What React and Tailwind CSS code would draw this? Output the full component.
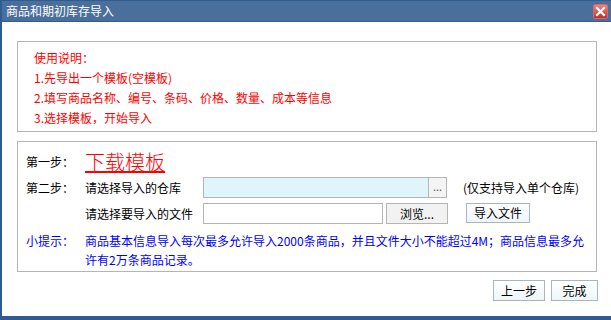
import React from 'react';

const font = { fontFamily: '"Noto Sans CJK SC", "Liberation Sans", sans-serif' };

const Btn = ({ children, className = '' }) => (
  <button
    className={`flex items-center justify-center border border-[#a9b6c0] bg-gradient-to-b from-white to-[#eef6fa] text-[12px] text-black leading-none ${className}`}
  >
    {children}
  </button>
);

export default function App() {
  return (
    <div className="w-[611px] h-[320px] overflow-hidden bg-white flex flex-col border-l-2 border-b-4 border-[#2d5d90]" style={font}>
      {/* Title bar */}
      <div className="h-[22px] shrink-0 flex items-center justify-between bg-[#4a6f9b] border-t border-b border-[#2f5d8f] pl-1 pr-[3px]">
        <span className="text-[12px] text-white leading-none">商品和期初库存导入</span>
        <div className="w-[15px] h-[15px] rounded-[2px] bg-gradient-to-b from-[#f08080] to-[#c42a2a] border border-[#d66] flex items-center justify-center">
          <svg width="11" height="11" viewBox="0 0 11 11">
            <path d="M2 2 L9 9 M9 2 L2 9" stroke="white" strokeWidth="2.2" strokeLinecap="square" />
          </svg>
        </div>
      </div>

      {/* Instructions */}
      <div className="ml-[15px] mt-[19px] w-[580px] h-[91px] border border-[#b5b5b5] pl-4 pt-[6px] text-[12px] text-[#ff0000] leading-[20px]">
        <div>使用说明：</div>
        <div>1.先导出一个模板(空模板)</div>
        <div>2.填写商品名称、编号、条码、价格、数量、成本等信息</div>
        <div>3.选择模板，开始导入</div>
      </div>

      {/* Steps */}
      <div className="ml-[15px] mt-[9px] w-[580px] h-[131px] border border-[#b5b5b5] pl-2 pt-[9px] text-[12px] text-black">
        <div className="flex items-center h-[22px]">
          <span className="w-[59px]">第一步：</span>
          <a className="text-[20px] font-light leading-[22px] text-[#ff0000] underline underline-offset-1">下载模板</a>
        </div>
        <div className="flex items-center mt-[4px] h-[21px]">
          <span className="w-[59px]">第二步：</span>
          <span className="w-[118px]">请选择导入的仓库</span>
          <div className="flex h-[21px] w-[244px] border border-[#b5b5b5] bg-[#e0f4fc]">
            <div className="flex-1" />
            <div className="w-[18px] border-l border-[#b5b5b5] bg-[#f4f4f4] flex items-center justify-center text-[11px] leading-none text-[#555] pb-[2px]">...</div>
          </div>
          <span className="ml-[16px]">(仅支持导入单个仓库)</span>
        </div>
        <div className="flex items-center mt-[5px] h-[21px]">
          <span className="w-[59px]" />
          <span className="w-[118px]">请选择要导入的文件</span>
          <div className="w-[180px] h-[21px] border border-[#b5b5b5] bg-white" />
          <Btn className="ml-[3px] w-[62px] h-[21px] bg-none bg-[#f2f2f2] border-[#b5b5b5]">浏览...</Btn>
          <Btn className="ml-[18px] w-[64px] h-[20px] -mt-[2px]">导入文件</Btn>
        </div>
        <div className="flex mt-[7px] text-[#0000ff] leading-[19px]">
          <span className="w-[59px] shrink-0">小提示：</span>
          <div>
            <div>商品基本信息导入每次最多允许导入2000条商品，并且文件大小不能超过4M；商品信息最多允</div>
            <div>许有2万条商品记录。</div>
          </div>
        </div>
      </div>

      {/* Footer buttons */}
      <div className="flex justify-end gap-[6px] mt-[8px] w-[596px]">
        <Btn className="w-[52px] h-[21px]">上一步</Btn>
        <Btn className="w-[47px] h-[21px]">完成</Btn>
      </div>
    </div>
  );
}
